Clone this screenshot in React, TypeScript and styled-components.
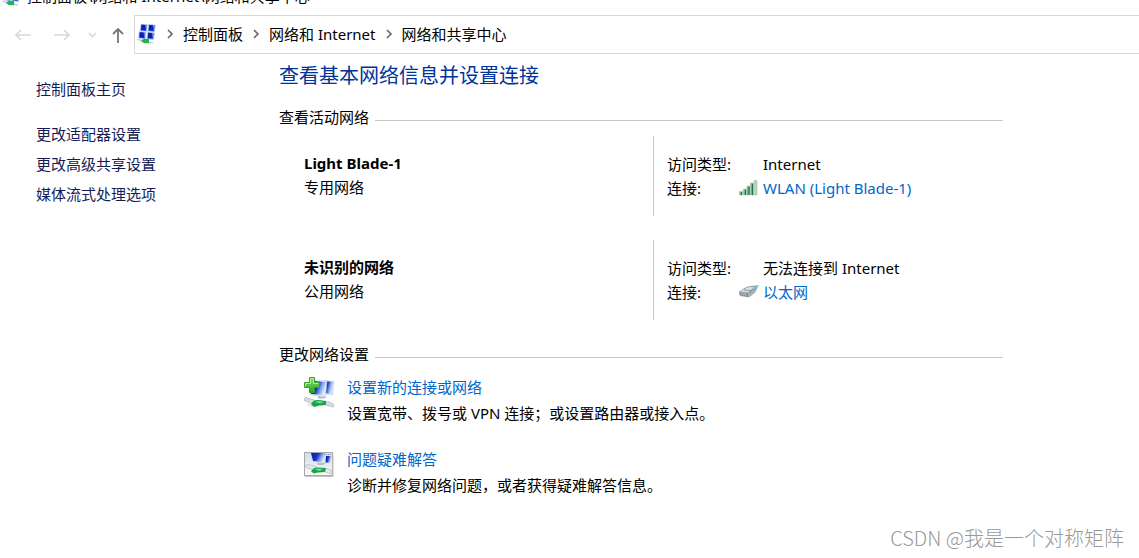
import React from 'react';
import styled, { createGlobalStyle } from 'styled-components';

const GlobalStyle = createGlobalStyle`
  * { box-sizing: border-box; }
  body {
    margin: 0;
    background: #fff;
    color: #000;
    font: 15px/24px "Noto Sans", "Noto Sans CJK SC", sans-serif;
  }
`;

const Page = styled.div`
  position: relative;
  min-height: 100vh;
  overflow: hidden;
`;

const TitleBar = styled.header`
  display: flex;
  align-items: flex-end;
  gap: 5px;
  height: 6px;
  padding-left: 2px;
  overflow: hidden;
  line-height: 20px;
  white-space: nowrap;
  svg { flex: none; }
`;

const NavBar = styled.nav`
  display: flex;
  align-items: center;
  margin-top: 9px;
  height: 39px;
`;

const NavButtons = styled.div`
  display: flex;
  align-items: center;
  width: 134px;
  flex: none;
  padding-left: 15px;
`;

const NavButton = styled.button<{ $gap: number; $active?: boolean }>`
  display: flex;
  padding: 0;
  margin-right: ${(p) => p.$gap}px;
  border: 0;
  background: none;
  color: ${(p) => (p.$active ? '#777' : '#d9d9d9')};
`;

const AddressBar = styled.div`
  display: flex;
  align-items: center;
  flex: 1;
  height: 100%;
  padding: 0 0 2px 2px;
  border: 1px solid #d9d9d9;
  border-right: 0;
  white-space: nowrap;
`;

const Crumb = styled.a`
  color: #000;
  text-decoration: none;
`;

const Separator = styled.span`
  display: flex;
  justify-content: center;
  width: 26px;
  color: #666;
`;

const Body = styled.div`
  display: flex;
`;

const Sidebar = styled.aside`
  display: flex;
  flex-direction: column;
  flex: none;
  width: 279px;
  padding: 20px 0 0 36px;
  line-height: 30px;
`;

const SideLink = styled.a<{ $home?: boolean }>`
  color: #151c55;
  text-decoration: none;
  margin-bottom: ${(p) => (p.$home ? 15 : 0)}px;
`;

const Main = styled.main`
  flex: 1;
  max-width: 724px;
  padding-top: 8px;
`;

const Heading = styled.h1`
  margin: 0 0 17px;
  font-size: 20px;
  line-height: 28px;
  font-weight: 400;
  color: #003399;
`;

const SectionTitle = styled.h2`
  display: flex;
  align-items: center;
  gap: 6px;
  margin: 0;
  font-size: 15px;
  line-height: 20px;
  font-weight: 400;
  &::after {
    content: '';
    flex: 1;
    height: 1px;
    margin-top: 6px;
    background: #c8c8c8;
  }
`;

const NetworkList = styled.div`
  display: flex;
  flex-direction: column;
  gap: 24px;
  padding: 9px 0 24px 25px;
`;

const Network = styled.section`
  display: flex;
`;

const NetworkName = styled.div`
  flex: 1;
  padding: 15px 0 17px;
`;

const Name = styled.h3`
  margin: 0;
  font-size: 15px;
  line-height: 24px;
  font-weight: 700;
`;

const Details = styled.div`
  display: grid;
  grid-template-columns: 72px 24px 1fr;
  align-content: center;
  width: 350px;
  height: 80px;
  padding-left: 13px;
  border-left: 1px solid #c8c8c8;
`;

const Value = styled.span`
  grid-column: 3;
`;

const IconCell = styled.span`
  display: flex;
  align-items: center;
`;

const Link = styled.a`
  color: #0066cc;
  text-decoration: none;
`;

const TaskList = styled.div`
  display: flex;
  flex-direction: column;
  gap: 20px;
  padding: 10px 0 0 25px;
`;

const Task = styled.div`
  display: flex;
  gap: 13px;
  line-height: 26px;
  svg { flex: none; margin-top: 3px; }
`;

const TaskText = styled.div`
  display: flex;
  flex-direction: column;
  align-items: flex-start;
`;

const Watermark = styled.div`
  position: absolute;
  right: 15px;
  bottom: 6px;
  color: #999;
  font: 20px/28px "Noto Sans CJK SC", sans-serif;
  font-weight: 300;
`;

const Chevron = () => (
  <svg width="8" height="12" viewBox="0 0 8 12" fill="none" stroke="currentColor" strokeWidth="1.6">
    <path d="M2 2l4 4-4 4" />
  </svg>
);

const Arrow = ({ flip }: { flip?: boolean }) => (
  <svg width="16" height="14" viewBox="0 0 16 14" fill="none" stroke="currentColor" strokeWidth="1.6">
    <path d={flip ? 'M0 7h15M10 2l5 5-5 5' : 'M16 7H1M6 2L1 7l5 5'} />
  </svg>
);

const Gradients = () => (
  <svg width="0" height="0" aria-hidden="true" display="block">
    <defs>
      <linearGradient id="screen" x1="0" y1="0" x2="1" y2=".35">
        <stop offset="0" stopColor="#0715a8" />
        <stop offset=".5" stopColor="#1b35c9" />
        <stop offset=".75" stopColor="#7fa2ea" />
        <stop offset="1" stopColor="#dcebfc" />
      </linearGradient>
      <linearGradient id="plus" x1="0" y1="0" x2="0" y2="1">
        <stop offset="0" stopColor="#8fe06a" />
        <stop offset="1" stopColor="#24a51f" />
      </linearGradient>
      <linearGradient id="panel" x1="0" y1="0" x2="0" y2="1">
        <stop offset="0" stopColor="#d3dde6" />
        <stop offset="1" stopColor="#fafafa" />
      </linearGradient>
    </defs>
  </svg>
);

const NetworkIcon = () => (
  <svg width="20" height="20" viewBox="0 0 20 20">
    <g fill="#5d7fe0" stroke="#d3def2" strokeWidth=".6">
      <path d="M4 0l6.500.5-.8 7L3 7zM11.500 .3l7 .7-1 7-6.700-.5zM2 7.500l7 .7-.8 7L1.500 14zM10.500 8l7 .7-1 7-6.500-.7z" />
    </g>
    <path d="M4.500 .8l3.500.2 1 5.500L4 6zM12.200 1l3.500.3 1 5.500-5-.5zM3 8.300l3.500.3 1 5.500-5-.6zM11.200 8.800l3.500.3 1 5.500-5-.5z" fill="#0b1fb4" />
    <path d="M0 14.500l5 1 11 2.500v1.500l-4 .3-12-3.800z" fill="#cfd6d8" />
    <path d="M4 17c2-2.500 4-2.500 8-2v4l-5 .3z" fill="#20b456" />
  </svg>
);

const AddConnectionIcon = () => (
  <svg width="30" height="32" viewBox="0 0 30 32">
    <path d="M19 3l11 1-1 14-10-1z" fill="#c5d0e6" />
    <path d="M19 4l10 1-1 12-8-1z" fill="url(#screen)" />
    <path d="M6 3l17 1-1.500 15.500L6 18z" fill="#e4eaf3" stroke="#c2cddd" strokeWidth=".5" />
    <path d="M7 4l15 1-1.500 13L7 17z" fill="url(#screen)" />
    <path d="M14 19l9 1-3 1.500h-6z" fill="#b5bec5" />
    <path d="M0 21.500l2-1 8 2.500 1 3-3 .5-8-3zM21 25l3-.5 5.500 2.500.5 2.500-2 .5-6-2z" fill="#d8ddde" stroke="#a3adb1" strokeWidth=".6" />
    <path d="M3 27c3-1 6-4 10-4l10 1-1 4-11 2H5z" fill="#d8ddde" opacity=".6" />
    <path d="M7 27c2-3 4-4.500 7-4l8 1v4l-7 .5-5 1.500z" fill="#17a44a" />
    <path d="M11 25c2-1.500 5-1 9 0l-4 1.500z" fill="#62e08c" />
    <path d="M5.500 .5h5v5h5v5h-5v5h-5v-5h-5v-5h5z" fill="url(#plus)" stroke="#36a02c" />
    <path d="M1.500 9.500v-3h5v-5h3v5h5" fill="none" stroke="#b5f096" />
  </svg>
);

const TroubleshootIcon = () => (
  <svg width="30" height="32" viewBox="0 -3 30 32">
    <rect x=".5" y=".5" width="28" height="23" fill="url(#panel)" stroke="#a3a8ac" />
    <path d="M1 24.500h28V2" fill="none" stroke="#c4c4c4" />
    <path d="M7 1h14.500l-1 9.500L9 9z" fill="url(#screen)" />
    <path d="M22 4h5.500v7l-6-.5z" fill="url(#screen)" />
    <path d="M20 2.500h7" stroke="#8793a0" strokeDasharray="1 1" />
    <path d="M13 10.500l9 .5-3 2h-5z" fill="#b5bec5" />
    <path d="M2 13l2-.5 8 2 1 3-3 .5-8-2.500zM20 17l3-.5 5 2v3h-2l-6-2z" fill="#e3e7e8" stroke="#a9b2b6" strokeWidth=".6" />
    <path d="M7 19.500c2-3 4-4.500 7-4l8 .5-1 4-7 .5-4 1z" fill="#17a44a" />
    <path d="M11 17.500c2-1.500 5-1 8 0l-4 1.500z" fill="#62e08c" />
  </svg>
);

const SignalIcon = () => (
  <svg width="19" height="16" viewBox="0 0 19 16">
    <g fill="#6db58a" stroke="#a8bdb0" strokeWidth=".6">
      <path d="M.5 11.500h3V15h-3zM4.500 9h3v6h-3zM8 6h3v9H8zM11.500 3h3v12h-3z" />
      <path d="M15 .5h3V15h-3z" fill="#c9ccca" />
    </g>
    <path d="M2.500 12v3M6.500 10v5M10 7v8M13.500 4v11" stroke="#187643" />
  </svg>
);

const EthernetIcon = () => (
  <svg width="20" height="14" viewBox="0 0 20 14">
    <path d="M13 2l4-2 3 .5-3 5-3-1z" fill="#7cc6e6" />
    <path d="M0 7l8-5 7-1 2 2-1 4-6 5-9-1.500z" fill="#a9b5bd" stroke="#788791" strokeWidth=".6" />
    <path d="M1 6.500l8-4 6-.5-6 5z" fill="#dbe3e8" />
    <path d="M1 7.500l8 .5v3.500l-7-1z" fill="#7d858a" />
    <path d="M3 8v2M5 8v2.500M7 8v3" stroke="#d7c87b" />
    <path d="M5 5l7 .5M10 8l5-4" stroke="#6e7b84" strokeWidth=".7" />
  </svg>
);

const networks = [
  { name: 'Light Blade-1', kind: '专用网络', access: 'Internet', link: 'WLAN (Light Blade-1)', icon: <SignalIcon /> },
  { name: '未识别的网络', kind: '公用网络', access: '无法连接到 Internet', link: '以太网', icon: <EthernetIcon /> },
];

const tasks = [
  { title: '设置新的连接或网络', text: '设置宽带、拨号或 VPN 连接；或设置路由器或接入点。', icon: <AddConnectionIcon /> },
  { title: '问题疑难解答', text: '诊断并修复网络问题，或者获得疑难解答信息。', icon: <TroubleshootIcon /> },
];

const crumbs = ['控制面板', '网络和 Internet', '网络和共享中心'];

export default function App() {
  return (
    <Page lang="zh-CN">
      <GlobalStyle />
      <TitleBar>
        <NetworkIcon />
        <span>控制面板\网络和 Internet\网络和共享中心</span>
      </TitleBar>
      <NavBar>
        <NavButtons>
          <NavButton $gap={23} aria-label="后退"><Arrow /></NavButton>
          <NavButton $gap={18} aria-label="前进"><Arrow flip /></NavButton>
          <NavButton $gap={15} aria-label="最近位置">
            <svg width="9" height="8" viewBox="0 0 9 8" fill="none" stroke="currentColor" strokeWidth="1.6"><path d="M1 2l3.500 3.500L8 2" /></svg>
          </NavButton>
          <NavButton $gap={0} $active aria-label="上移">
            <svg width="12" height="18" viewBox="0 0 12 18" fill="none" stroke="currentColor" strokeWidth="1.8"><path d="M6 17V3M1 8l5-5 5 5" /></svg>
          </NavButton>
        </NavButtons>
        <AddressBar>
          <NetworkIcon />
          {crumbs.map((c) => (
            <React.Fragment key={c}>
              <Separator><Chevron /></Separator>
              <Crumb href="#">{c}</Crumb>
            </React.Fragment>
          ))}
        </AddressBar>
      </NavBar>
      <Body>
        <Sidebar>
          <SideLink href="#" $home>控制面板主页</SideLink>
          <SideLink href="#">更改适配器设置</SideLink>
          <SideLink href="#">更改高级共享设置</SideLink>
          <SideLink href="#">媒体流式处理选项</SideLink>
        </Sidebar>
        <Main>
          <Heading>查看基本网络信息并设置连接</Heading>
          <SectionTitle>查看活动网络</SectionTitle>
          <NetworkList>
            {networks.map((n) => (
              <Network key={n.name}>
                <NetworkName>
                  <Name>{n.name}</Name>
                  <div>{n.kind}</div>
                </NetworkName>
                <Details>
                  <span>访问类型:</span>
                  <Value>{n.access}</Value>
                  <span>连接:</span>
                  <IconCell>{n.icon}</IconCell>
                  <Link href="#">{n.link}</Link>
                </Details>
              </Network>
            ))}
          </NetworkList>
          <SectionTitle>更改网络设置</SectionTitle>
          <TaskList>
            {tasks.map((t) => (
              <Task key={t.title}>
                {t.icon}
                <TaskText>
                  <Link href="#">{t.title}</Link>
                  <span>{t.text}</span>
                </TaskText>
              </Task>
            ))}
          </TaskList>
        </Main>
      </Body>
      <Watermark>CSDN @我是一个对称矩阵</Watermark>
      <Gradients />
    </Page>
  );
}
